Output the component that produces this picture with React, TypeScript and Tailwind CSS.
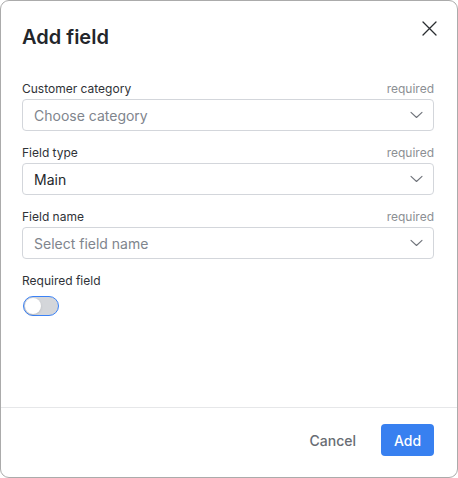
import React from "react";

function Chevron() {
  return (
    <svg width="13" height="8" viewBox="0 0 13 8" fill="none">
      <path d="M1 1.3L6.5 6.5L12 1.3" stroke="#6f737a" strokeWidth="1.1" strokeLinecap="round" strokeLinejoin="round" />
    </svg>
  );
}

function Field({ label, value, placeholder }: { label: string; value: string; placeholder?: boolean }) {
  return (
    <div className="flex flex-col">
      <div className="flex items-center justify-between h-[16px] text-[12px] leading-[16px]">
        <span className="text-[#2f3237]">{label}</span>
        <span className="text-[#8c8f94]">required</span>
      </div>
      <div className="mt-[2px] h-[32px] flex items-center justify-between border border-[#d3d6db] rounded-[4px] pl-[11px] pr-[10px]">
        <span className={"text-[14px] " + (placeholder ? "text-[#80858d]" : "text-[#23262b]")}>{value}</span>
        <Chevron />
      </div>
    </div>
  );
}

export default function App() {
  return (
    <div className="w-[458px] h-[478px] bg-white" style={{ fontFamily: "Inter, 'Noto Sans', sans-serif" }}>
      <div className="w-full h-full border border-[#ababab] rounded-[9px] flex flex-col overflow-hidden">
        <div className="flex-1 pl-[21px] pr-[23px] pt-[22px] relative">
          <h1 className="text-[20px] leading-[28px] font-semibold text-[#23262b]">Add field</h1>
          <button className="absolute right-[19px] top-[18px] w-[18px] h-[18px] flex items-center justify-center">
            <svg width="15" height="15" viewBox="0 0 15 15" fill="none">
              <path d="M1 1L14 14M14 1L1 14" stroke="#2a2d31" strokeWidth="1.3" strokeLinecap="round" />
            </svg>
          </button>
          <div className="mt-[30px] flex flex-col gap-[14px]">
            <Field label="Customer category" value="Choose category" placeholder />
            <Field label="Field type" value="Main" />
            <Field label="Field name" value="Select field name" placeholder />
            <div className="flex flex-col">
              <span className="text-[12px] leading-[16px] text-[#2f3237]">Required field</span>
              <div className="mt-[7px] ml-[1px] w-[36px] h-[20px] rounded-full border-[1.5px] border-[#3b82f6] bg-[#d4d6da] flex items-center px-[1px]">
                <div className="w-[16px] h-[16px] rounded-full bg-white shadow-sm" />
              </div>
            </div>
          </div>
        </div>
        <div className="border-t border-[#e6e7e9] h-[70px] flex items-start justify-end pt-[16px] pr-[23px] gap-[25px]">
          <button className="h-[32px] text-[14px] font-medium text-[#686c73]">Cancel</button>
          <button className="h-[32px] w-[53px] rounded-[4px] bg-[#3880f0] text-white text-[14px] font-medium">Add</button>
        </div>
      </div>
    </div>
  );
}
